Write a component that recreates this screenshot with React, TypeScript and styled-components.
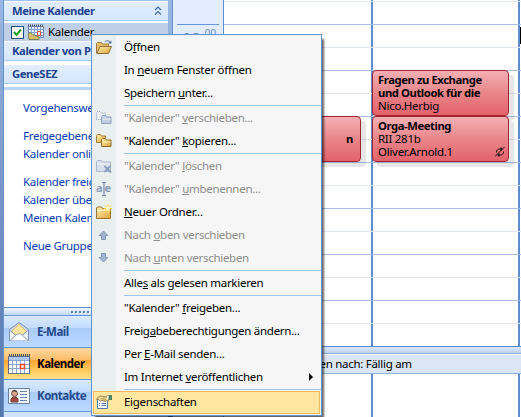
import React from "react";
import styled, { createGlobalStyle, css } from "styled-components";

const Global = createGlobalStyle`
  * { box-sizing: border-box; }
  body { margin: 0; overflow: hidden; font: 11.5px/16px "Noto Sans", "Open Sans", sans-serif; letter-spacing: -0.28px; color: #000; }
  svg { display: block; }
  u { text-underline-offset: 1px; text-decoration-thickness: 1px; }
`;

const Window = styled.div`
  position: relative;
  display: flex;
  width: 521px;
  height: 417px;
  overflow: hidden;
  background: #fff;
`;

const Edge = styled.div<{ $w: number }>`
  flex: 0 0 ${(p) => p.$w}px;
  background: linear-gradient(#9ab8e4, #7897c8 45%, #5477ac);
  border-right: 1px solid #6b91c9;
`;

const Sidebar = styled.aside`
  flex: 0 0 164px;
  display: flex;
  flex-direction: column;
  overflow: hidden;
`;

const GroupHeader = styled.div<{ $gap: number }>`
  flex: none;
  display: flex;
  align-items: center;
  height: 19px;
  margin-bottom: ${(p) => p.$gap}px;
  padding-left: 8px;
  white-space: nowrap;
  color: #1d4291;
  font-weight: 700;
  font-size: 11.3px;
  letter-spacing: -0.42px;
  background: linear-gradient(#e2eeff, #d5e6fe);
  border-bottom: 1px solid #a4ccff;
  svg { margin-left: auto; margin-right: 6px; }
`;

const TopLine = styled.div`
  flex: none;
  height: 2px;
  background: #cfe2fd;
  border-bottom: 1px solid #fff;
  border-top: 1px solid #9dc4f5;
`;

const CalendarRow = styled.div`
  flex: none;
  display: flex;
  align-items: center;
  height: 18px;
  margin-bottom: 1px;
  padding-left: 7px;
  background: #c0cfe8;
`;

const Check = styled.span`
  width: 13px;
  height: 13px;
  margin-right: 4px;
  background: #f8f9f7;
  border: 1px solid #1c5180;
`;

const CalendarName = styled.span`
  margin-left: 4px;
`;

const Divider = styled.div`
  flex: none;
  height: 3px;
  margin-top: 3px;
  background: #b8d6fc;
`;

const Links = styled.div`
  flex: 1;
  padding: 9px 0 0 19px;
  color: #0b3cb5;
  white-space: nowrap;
`;

const Link = styled.div<{ $gap?: boolean }>`
  height: 18px;
  line-height: 18px;
  margin-bottom: ${(p) => (p.$gap ? 10 : 0)}px;
`;

const Grip = styled.div`
  flex: none;
  height: 9px;
  display: flex;
  justify-content: center;
  align-items: center;
  gap: 2px;
  border-top: 1px solid #618fd0;
  background: linear-gradient(#eef5ff, #c4daf8);
  border-bottom: 1px solid #6797d6;
`;

const Dot = styled.i`
  width: 2px;
  height: 2px;
  background: #4f7fbf;
  box-shadow: 1px 1px #fff;
`;

const NavButton = styled.div<{ $active?: boolean }>`
  flex: none;
  display: flex;
  align-items: center;
  height: 32px;
  padding-left: 4px;
  gap: 7px;
  font-weight: 700;
  letter-spacing: -0.5px;
  color: ${(p) => (p.$active ? "#000" : "#25498c")};
  background: ${(p) =>
    p.$active
      ? "linear-gradient(#ffd9a0 0, #ffbd69 38%, #ffa536 40%, #ffd66f 85%, #ffe291)"
      : "linear-gradient(#d9eaff 0, #c3dcff 38%, #a9ccfb 40%, #bcd9ff 100%)"};
  border-bottom: 1px solid #6797d6;
`;

const NavSpare = styled.div`
  flex: none;
  height: 5px;
  background: #d0e3fd;
`;

const TimeColumn = styled.div`
  flex: 0 0 51px;
  background: #e2eeff;
  border-right: 1px solid #5b8dd4;
  padding: 24px 4px 0;
`;

const Hour = styled.div`
  display: flex;
  justify-content: flex-end;
  align-items: flex-start;
  gap: 4px;
  height: 46px;
  padding-right: 3px;
  border-top: 1px solid #6596d8;
  color: #6c91ca;
  font-size: 17px;
  line-height: 28px;
  overflow: hidden;
`;

const Minutes = styled.span`
  font-size: 10.5px;
  line-height: 17px;
`;

const Main = styled.main`
  flex: 1;
  position: relative;
  display: flex;
  flex-direction: column;
  background: linear-gradient(#5d8dcf, #5d8dcf) 147px 0 / 2px 100% no-repeat,
    linear-gradient(#5d8dcf, #5d8dcf) 294px 0 / 2px 100% no-repeat, #fff;
`;

const Slots = styled.div`
  flex: 0 0 346px;
  background: repeating-linear-gradient(
    #fff0 0 1px, #e2e7f5 1px 2px, #fff0 2px 24px, #a5bfe6 24px 25px, #fff0 25px 46px
  );
`;

const TaskHeader = styled.div`
  flex: none;
  height: 28px;
  padding-left: 57px;
  border-top: 1px solid #5789cc;
  border-bottom: 1px solid #8eb0dd;
  background: linear-gradient(#dce7f7, #bfd4ef 6px, #86aadb 6px, #86aadb 7px, #fff 7px, #fff 8px, #dbe6f4 8px);
  line-height: 34px;
  white-space: nowrap;
`;

const Appointment = styled.section<{ $x: number; $y: number; $w: number }>`
  position: absolute;
  left: ${(p) => p.$x}px;
  top: ${(p) => p.$y}px;
  width: ${(p) => p.$w}px;
  height: 46px;
  padding: 2px 5px;
  border: 1px solid #a02632;
  border-radius: 4px;
  background: linear-gradient(#f4b0b4, #e9868a 50%, #e4626b);
  box-shadow: 5px 5px 0 rgba(60, 60, 60, 0.13);
  line-height: 13px;
  white-space: nowrap;
  svg { position: absolute; right: 3px; bottom: 4px; }
`;

const Title = styled.div`
  font-weight: 700;
  font-size: 11.3px;
  letter-spacing: -0.44px;
`;

const TailTitle = styled(Title)`
  text-align: right;
  padding: 13px 2px 0 0;
`;

const Caret = styled.div`
  position: absolute;
  right: 0;
  top: 27px;
  width: 1px;
  height: 17px;
  background: #000;
`;

const Menu = styled.nav`
  position: absolute;
  left: 91px;
  top: 34px;
  width: 231px;
  height: 382px;
  padding-top: 1px;
  border: 1px solid #6593cf;
  background: linear-gradient(90deg, #e9eeee 24px, #f6f6f6 24px);
  box-shadow: 3px 4px 2px -1px rgba(0, 0, 0, 0.6);
`;

const MenuItem = styled.div<{ $off?: boolean; $hot?: boolean }>`
  display: flex;
  align-items: center;
  height: 23px;
  padding: 0 0 1px 4px;
  white-space: nowrap;
  color: ${(p) => (p.$off ? "#8d8d8d" : "#000")};
  ${(p) =>
    p.$hot &&
    css`
      margin: 0 1px;
      padding-left: 2px;
      background: #ffe7a2;
      border: 1px solid #f5b660;
    `}
`;

const IconCell = styled.span`
  flex: 0 0 28px;
  height: 16px;
`;

const Arrow = styled.span`
  margin: 0 8px 0 auto;
  border: 4px solid transparent;
  border-left-color: #000;
  border-right-width: 0;
`;

const Separator = styled.hr`
  height: 1px;
  margin: 0 0 1px 32px;
  border: 0;
  background: #9dc3f3;
`;

const Svg = ({ w = 16, h = 16, children }: { w?: number; h?: number; children: React.ReactNode }) => (
  <svg width={w} height={h} viewBox={`0 0 ${w} ${h}`} fill="none">{children}</svg>
);

const GoldGradient = () => (
  <defs>
    <linearGradient id="gold" x1="0" y1="0" x2="1" y2="1">
      <stop stopColor="#fff0ad" /><stop offset="1" stopColor="#dda43e" />
    </linearGradient>
  </defs>
);

const OpenIcon = () => (
  <Svg><GoldGradient />
    <path d="M.5 14V4.5l1-1h4l1 1.5h6v3" fill="#e7bd67" stroke="#9d783e" />
    <path d="M.8 14.5 4 7.5h11.5l-3 7z" fill="url(#gold)" stroke="#8d6b39" />
    <path d="M9 3c1-2 4-2 5 .5" stroke="#7895bb" strokeWidth="1.2" /><path d="m15.5 1.5-.3 3.5-3-1z" fill="#526f99" />
  </Svg>
);

const CopyIcon = ({ off }: { off?: boolean }) => (
  <Svg><GoldGradient />
    <path d="M.5 9.5v-7l1-1h3l1 1.5h4v6.5z" fill={off ? "#edf1f6" : "url(#gold)"} stroke={off ? "#8fa1bf" : "#a87d37"} strokeDasharray={off ? "1 1" : undefined} />
    <path d="M5.5 13.5v-7l1-1h3l1 1.5h4.5v6.5z" fill={off ? "#c2cee1" : "url(#gold)"} stroke={off ? "#92a4c0" : "#946a27"} />
    <path d="M6.5 9h8" stroke={off ? "#eef3fa" : "#fff2b5"} />
  </Svg>
);

const DeleteIcon = () => (
  <Svg>
    <path d="M.5 13.5v-10l1-1h4l1 1.5h8v9.5z" fill="#d6dfeb" stroke="#aab9ce" />
    <path d="M1 6h13" stroke="#f3f6fa" />
    <path d="m8.5 8 6.5 6.5M14.5 8 8.5 14" stroke="#8b9ebb" strokeWidth="1.8" />
  </Svg>
);

const RenameLabel = styled.span`
  position: relative;
  display: flex;
  justify-content: space-between;
  width: 15px;
  font: 700 11px/14px "Noto Sans", sans-serif;
  color: #8b9cba;
  letter-spacing: 0;
  svg { position: absolute; left: 5px; top: 1px; }
`;

const RenameIcon = () => (
  <RenameLabel>
    <span>a</span><span>e</span>
    <Svg w={6} h={14}><path d="M1 .5h1.5l.5.5.5-.5H5M3 1v12M1 13.5h1.5L3 13l.5.5H5" stroke="#657b9e" /></Svg>
  </RenameLabel>
);

const NewIcon = () => (
  <Svg><GoldGradient />
    <path d="M.5 14.5V4l1-1h4l1 1.5h8v10z" fill="url(#gold)" stroke="#9a732f" />
    <path d="M1 6.5h13" stroke="#fff3bd" />
    <path d="M12 0v9M7.7 4.5h8.3M9 1.5l6 6M15 1.5l-6 6" stroke="#ffd942" />
    <circle cx="12" cy="4.5" r="2" fill="#fffac0" />
  </Svg>
);

const ArrowIcon = ({ down }: { down?: boolean }) => (
  <Svg><path d={down ? "M5.5 3.5h4v4h2.3L7.5 12 3.2 7.5h2.3z" : "M5.5 12.5h4v-4h2.3L7.5 4 3.2 8.5h2.3z"} fill="#a2b4d0" stroke="#8298ba" /></Svg>
);

const PropertiesIcon = () => (
  <Svg>
    <path d="M1.5 5.5h10v9h-10z" fill="#f7fbff" stroke="#5779a4" />
    <path d="M3 9.5h1M5.5 9.5H10M3 11.5h1M5.5 11.5H10" stroke="#5e7fab" />
    <path d="M.5 5.5c1-2 3-4 5-3.5l5 1 1-1.5h1v5H11L8.5 8 7 6.5 4 7 2.5 5.5z" fill="#ecd58f" stroke="#8c7547" strokeWidth=".8" />
    <path d="M5 4l4 3M7 3.5l3 2.5" stroke="#9c834c" strokeWidth=".7" />
    <path d="M12.5 1h3.5v5h-3.5z" fill="#4e8265" /><path d="M12 1.5v4" stroke="#fff" />
  </Svg>
);

const MailIcon = () => (
  <Svg w={22} h={22}>
    <path d="m1.5 8.5 9.5-7 9.5 7v11h-19z" fill="#ccd9ea" stroke="#8092af" />
    <path d="m4 10 7-7 7 7v4H4z" fill="#ffe49b" stroke="#dab263" strokeWidth=".7" />
    <path d="m1.5 9 7 6h5l7-6v10.500h-19z" fill="#f0f5fc" stroke="#7f95b5" />
    <path d="m2 19.5 7-6.500h4l7 6.500" fill="#fff" stroke="#91a3bd" />
  </Svg>
);

const CalendarIcon = () => (
  <Svg w={22} h={22}>
    <path d="M.5 3.5h21v17H.5z" fill="#fff" stroke="#5a6780" />
    <path d="M1 4h20v3H1z" fill="#aec8ef" />
    <path d="M1 7.500h20M1 11.500h20M1 15.500h20M4.500 7v13M8.500 7v13M12.500 7v13M16.500 7v13" stroke="#8ba5d2" />
    <path d="M1 2h21" stroke="#4b4e58" strokeWidth="2" strokeDasharray="1 1" />
    <path d="M12.500 11.500h4v4h-4z" fill="#fff" stroke="#ed4a21" strokeWidth="1.500" />
    <path d="M0 20.500h22" stroke="#68778e" />
  </Svg>
);

const ContactIcon = () => (
  <Svg w={22} h={22}>
    <path d="M.5 3.500h21v15H.5z" fill="#f3f8ff" stroke="#6881a9" />
    <path d="M3 17v-3l2-2h3l2 2v3z" fill="#a64a38" stroke="#6e4141" /><circle cx="6.500" cy="8.500" r="3" fill="#e0a286" stroke="#665057" />
    <path d="M4 7c0-3 5-3 5 0-2 0-3-1-5 0" fill="#554b54" />
    <path d="M12 6.500h7M12 9.500h7M12 12.500h7M12 15.500h7" stroke="#6683b2" />
  </Svg>
);

const SmallCalendarIcon = () => (
  <Svg>
    <path d="M.5 2.500h15v11H.5z" fill="#f4f8ff" stroke="#7088b5" />
    <path d="M1 5.500h14M1 8.500h14M1 11.500h14M3.500 3v11M6.500 3v11M9.500 3v11M12.500 3v11" stroke="#7ca0d8" />
    <path d="M0 1.500h16" stroke="#46505e" strokeWidth="2" strokeDasharray="1 1" />
    <path d="M9.500 7.500h3v4h-3z" fill="#fff" stroke="#e9532c" />
    <path d="M0 11c1-3 3-3 4-1l4 2 3 1v2.500H1z" fill="#d8be6c" stroke="#66733d" strokeWidth=".8" />
  </Svg>
);

type Entry = { icon?: React.ReactNode; label: React.ReactNode; off?: boolean; sub?: boolean; hot?: boolean };

const sections: Entry[][] = [
  [
    { icon: <OpenIcon />, label: <>Ö<u>f</u>fnen</> },
    { label: <>In <u>n</u>euem Fenster öffnen</> },
    { label: <>Speichern <u>u</u>nter...</> },
  ],
  [
    { icon: <CopyIcon off />, label: <>"Kalender" <u>v</u>erschieben...</>, off: true },
    { icon: <CopyIcon />, label: <>"Kalender" <u>k</u>opieren...</> },
  ],
  [
    { icon: <DeleteIcon />, label: <>"Kalender" <u>l</u>öschen</>, off: true },
    { icon: <RenameIcon />, label: <>"Kalender" <u>u</u>mbenennen...</>, off: true },
    { icon: <NewIcon />, label: <><u>N</u>euer Ordner...</> },
    { icon: <ArrowIcon />, label: <>Nach <u>o</u>ben verschieben</>, off: true },
    { icon: <ArrowIcon down />, label: <>Nach <u>u</u>nten verschieben</>, off: true },
  ],
  [{ label: <>Alle<u>s</u> als gelesen markieren</> }],
  [
    { label: <>"Kalender" <u>f</u>reigeben...</> },
    { label: <>Freig<u>a</u>beberechtigungen ändern...</> },
    { label: <>Per <u>E</u>-Mail senden...</> },
    { label: <>Im Internet <u>v</u>eröffentlichen</>, sub: true },
  ],
  [{ icon: <PropertiesIcon />, label: <>Ei<u>g</u>enschaften</>, hot: true }],
];

const links: [string, boolean][] = [
  ["Vorgehensweise", true], ["Freigegebene", false], ["Kalender online", true],
  ["Kalender freigeben", false], ["Kalender über", false], ["Meinen Kalender", true], ["Neue Gruppe", false],
];

export default function App() {
  return (
    <Window>
      <Global />
      <Edge $w={4} />
      <Sidebar>
        <TopLine />
        <GroupHeader $gap={2}>Meine Kalender
          <Svg w={8} h={10}><path d="m1 4 3-3 3 3M1 8.500l3-3 3 3" stroke="#3e67aa" strokeWidth="1.200" /></Svg>
        </GroupHeader>
        <CalendarRow>
          <Check><Svg w={11} h={11}><path d="m2 5 2.500 3L9 2.500" stroke="#21a121" strokeWidth="2" /></Svg></Check>
          <SmallCalendarIcon />
          <CalendarName>Kalender</CalendarName>
        </CalendarRow>
        <GroupHeader $gap={4}>Kalender von Personen</GroupHeader>
        <GroupHeader $gap={0}>GeneSEZ</GroupHeader>
        <Divider />
        <Links>{links.map(([t, gap]) => <Link key={t} $gap={gap}>{t}</Link>)}</Links>
        <Grip>{Array.from({ length: 8 }, (_, i) => <Dot key={i} />)}</Grip>
        <NavButton><MailIcon />E-Mail</NavButton>
        <NavButton $active><CalendarIcon />Kalender</NavButton>
        <NavButton><ContactIcon />Kontakte</NavButton>
        <NavSpare />
      </Sidebar>
      <Edge $w={5} />
      <TimeColumn><Hour><span>08</span><Minutes>00</Minutes></Hour></TimeColumn>
      <Main>
        <Slots />
        <TaskHeader>Anordnen nach: Fällig am</TaskHeader>
        <Appointment $x={60} $y={116} $w={77}><TailTitle>n</TailTitle></Appointment>
        <Appointment $x={148} $y={70} $w={137}>
          <Title>Fragen zu Exchange</Title><Title>und Outlook für die</Title><div>Nico.Herbig</div>
        </Appointment>
        <Appointment $x={148} $y={116} $w={137}>
          <Title>Orga-Meeting</Title><div>RII 281b</div><div>Oliver.Arnold.1</div>
          <Svg w={10} h={10}><path d="M1.500 5.500V4l2-2h3M8.500 4.500V6l-2 2h-3M0 9.500 9.500 0" stroke="#211317" /><path d="M5.500 0 8 2 5.500 4zM4.500 6 2 8l2.500 2z" fill="#211317" /></Svg>
        </Appointment>
        <Caret />
      </Main>
      <Menu>
        {sections.map((items, s) => (
          <React.Fragment key={s}>
            {s > 0 && <Separator />}
            {items.map((item, i) => (
              <MenuItem key={i} $off={item.off} $hot={item.hot}>
                <IconCell>{item.icon}</IconCell>
                <span>{item.label}</span>
                {item.sub && <Arrow />}
              </MenuItem>
            ))}
          </React.Fragment>
        ))}
      </Menu>
    </Window>
  );
}
